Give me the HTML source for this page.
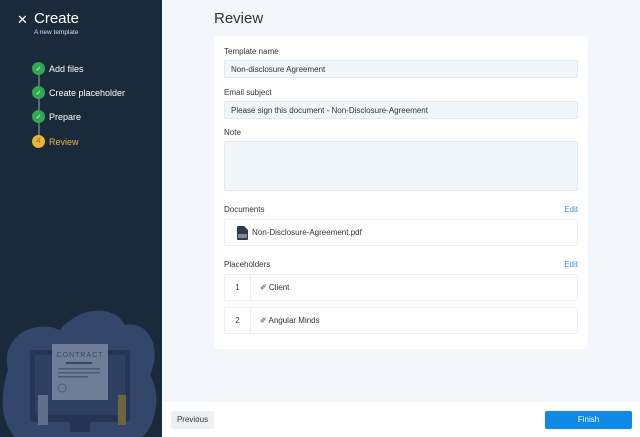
<!DOCTYPE html>
<html><head><meta charset="utf-8"><style>
*{box-sizing:border-box;margin:0;padding:0}
body{width:640px;height:437px;overflow:hidden;font-family:"Liberation Sans",sans-serif;background:#f3f6fa;position:relative}
.side{position:absolute;left:0;top:0;width:162px;height:437px;background:#1b2a3b;color:#fff;overflow:hidden}
.x{position:absolute;left:17px;top:12px;font-size:13px}
.t{position:absolute;left:34px;top:10px;font-size:15px}
.st{position:absolute;left:34px;top:29px;font-size:6.5px;color:#d8dde4}
.line{position:absolute;left:38px;top:70px;width:2px;height:72px;background:#5b6776}
.step{position:absolute;left:32px;font-size:9px;display:flex;align-items:center}
.dot{width:13px;height:13px;border-radius:50%;background:#2fa84f;color:#fff;font-size:7px;display:flex;align-items:center;justify-content:center;margin-right:4px}
.main h1{position:absolute;left:214px;top:10px;font-size:15px;font-weight:normal;color:#2b3440}
.card{position:absolute;left:214px;top:36px;width:374px;height:313px;background:#fff;border-radius:3px}
.lbl{position:absolute;left:10px;font-size:8px;color:#333}
.inp{position:absolute;left:10px;width:354px;background:#f1f6fa;border:1px solid #e2e9ef;border-radius:2px;font-size:8px;color:#333;padding-left:6px;display:flex;align-items:center}
.edit{position:absolute;right:10px;font-size:8px;color:#3a9ad6}
.box{position:absolute;left:10px;width:354px;border:1px solid #eceff2;border-radius:2px;font-size:8px;color:#333;display:flex;align-items:center}
.foot{position:absolute;left:162px;top:402px;width:478px;height:35px;background:#fff}
</style></head><body>
<div class="side">
<div class="x">✕</div><div class="t">Create</div><div class="st">A new template</div>
<div class="line"></div>
<div class="step" style="top:62px"><div class="dot">✓</div>Add files</div>
<div class="step" style="top:86px"><div class="dot">✓</div>Create placeholder</div>
<div class="step" style="top:110px"><div class="dot">✓</div>Prepare</div>
<div class="step" style="top:135px;color:#e6b53a"><div class="dot" style="background:#e6b53a;color:#8a6a10">4</div>Review</div>
<svg style="position:absolute;left:0;top:300px" width="162" height="137">
<path d="M8 70 C0 40 30 18 60 30 C80 5 115 5 125 25 C150 20 162 50 150 75 C165 100 150 137 140 137 L15 137 C0 120 0 95 8 70Z" fill="#34466a"/>
<rect x="30" y="50" width="100" height="72" rx="3" fill="#263556"/>
<rect x="35" y="55" width="90" height="60" fill="#2e3f62"/>
<rect x="70" y="122" width="20" height="10" fill="#263556"/>
<rect x="52" y="44" width="56" height="56" fill="#6f7d98"/>
<text x="80" y="57" font-size="7" text-anchor="middle" fill="#34466a" font-family="Liberation Sans" letter-spacing="1">CONTRACT</text>
<rect x="66" y="62" width="26" height="2" fill="#34466a"/>
<rect x="58" y="68" width="42" height="1.5" fill="#4a5a7a"/><rect x="58" y="72" width="42" height="1.5" fill="#4a5a7a"/><rect x="58" y="76" width="30" height="1.5" fill="#4a5a7a"/>
<circle cx="62" cy="88" r="4" fill="none" stroke="#4a5a7a"/>
<rect x="38" y="95" width="10" height="30" fill="#5f6f8c"/><rect x="118" y="95" width="8" height="30" fill="#6e6440"/>
</svg>
</div>
<div class="main"><h1>Review</h1>
<div class="card">
<div class="lbl" style="top:11px">Template name</div>
<div class="inp" style="top:24px;height:18px">Non-disclosure Agreement</div>
<div class="lbl" style="top:52px">Email subject</div>
<div class="inp" style="top:65px;height:18px">Please sign this document - Non-Disclosure-Agreement</div>
<div class="lbl" style="top:92px">Note</div>
<div class="inp" style="top:105px;height:50px"></div>
<div class="lbl" style="top:169px">Documents</div><div class="edit" style="top:169px">Edit</div>
<div class="box" style="top:183px;height:27px;padding-left:12px"><svg width="11" height="14" style="margin-right:4px"><path d="M0 1 Q0 0 1 0 L7 0 L11 4 L11 13 Q11 14 10 14 L1 14 Q0 14 0 13Z" fill="#2c3a4e"/><rect x="1" y="8" width="9" height="4" fill="#fff" opacity=".4"/></svg>Non-Disclosure-Agreement.pdf</div>
<div class="lbl" style="top:224px">Placeholders</div><div class="edit" style="top:224px">Edit</div>
<div class="box" style="top:238px;height:27px"><span style="width:26px;text-align:center;border-right:1px solid #eceff2;line-height:27px">1</span><span style="padding-left:9px">✐ Client</span></div>
<div class="box" style="top:271px;height:27px"><span style="width:26px;text-align:center;border-right:1px solid #eceff2;line-height:27px">2</span><span style="padding-left:9px">✐ Angular Minds</span></div>
</div></div>
<div class="foot">
<div style="position:absolute;left:9px;top:9px;width:43px;height:18px;background:#eef1f4;border-radius:2px;font-size:8px;color:#333;text-align:center;line-height:18px">Previous</div>
<div style="position:absolute;left:383px;top:9px;width:87px;height:18px;background:#0f8ae6;border-radius:2px;font-size:8px;color:#fff;text-align:center;line-height:18px">Finish</div>
</div>
</body></html>
